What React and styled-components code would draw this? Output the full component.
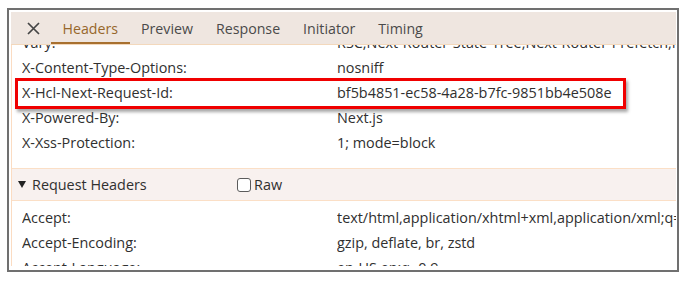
import React from 'react'
import styled, {createGlobalStyle} from 'styled-components'

const GlobalStyle = createGlobalStyle`
    body {
        margin: 0;
        background: #fff;
        font-family: "Open Sans", "Noto Sans", sans-serif;
        color: #303030;
    }
`

const Frame = styled.div`
    box-sizing: border-box;
    margin: 8px 0 0 7px;
    width: 672px;
    height: 264px;
    border: 2px solid #707070;
    padding: 2px 1px 4px 2px;
    background: #fff;
`

const Panel = styled.div`
    height: 100%;
    display: flex;
    flex-direction: column;
    overflow: hidden;
`

const TabBar = styled.div`
    flex: none;
    height: 32px;
    display: flex;
    align-items: stretch;
    background-color: #efe6e0;
    border-bottom: 1px solid #f3d8bc;
`

const CloseButton = styled.div`
    display: flex;
    align-items: center;
    margin: 0 11px 0 16px;
    color: #454545;
`

const Tab = styled.div`
    display: flex;
    align-items: center;
    padding: 0 11.5px;
    font-size: 14.2px;
    color: ${({active}) => active ? '#97672b' : '#4a4a4a'};
    box-shadow: ${({active}) => active ? 'inset 0 -2px 0 #a8702f' : 'none'};
`

const Content = styled.div`
    flex: 1;
    overflow: hidden;
    border-left: 1px solid #fbdcc2;
`

const Scroller = styled.div`
    margin-top: -15px;
`

const Section = styled.div`
    padding: ${({pad}) => pad};
`

const Row = styled.div`
    position: relative;
    height: 25px;
    line-height: 25px;
    display: grid;
    grid-template-columns: 315px 1fr;
    padding-left: 10px;
    font-size: 14.4px;
    white-space: nowrap;

    span {
        overflow: hidden;
    }

    ${({marked}) => marked && `
        &::after {
            content: '';
            position: absolute;
            left: 3px;
            top: -2px;
            bottom: -4px;
            width: 611px;
            box-sizing: border-box;
            border: 3px solid #f00000;
            box-shadow: 2px 3px 3px rgba(0, 0, 0, 0.35);
        }
    `}
`

const SectionHeader = styled.div`
    height: 31px;
    display: flex;
    align-items: center;
    padding-left: 6px;
    background-color: #f8f1ef;
    border-top: 1px solid #fbdfc6;
    border-bottom: 1px solid #fbdfc6;
    font-size: 14.4px;
`

const Title = styled.div`
    width: 219px;
    display: flex;
    align-items: center;
    gap: 6px;
`

const CheckLabel = styled.label`
    display: flex;
    align-items: center;
    gap: 3px;
`

const CheckBox = styled.span`
    box-sizing: border-box;
    width: 14px;
    height: 14px;
    border: 1.5px solid #5c5c5c;
    border-radius: 3px;
    background: #fff;
`

const responseHeaders = [
    ['Vary:', 'RSC,Next-Router-State-Tree,Next-Router-Prefetch,Next-Router-Segment-Prefetch'],
    ['X-Content-Type-Options:', 'nosniff'],
    ['X-Hcl-Next-Request-Id:', 'bf5b4851-ec58-4a28-b7fc-9851bb4e508e', true],
    ['X-Powered-By:', 'Next.js'],
    ['X-Xss-Protection:', '1; mode=block'],
]

const requestHeaders = [
    ['Accept:', 'text/html,application/xhtml+xml,application/xml;q=0.9,image/avif,image/webp'],
    ['Accept-Encoding:', 'gzip, deflate, br, zstd'],
    ['Accept-Language:', 'en-US,en;q=0.9'],
]

const tabs = ['Headers', 'Preview', 'Response', 'Initiator', 'Timing']

function App() {
    return (
        <>
            <GlobalStyle />
            <Frame>
                <Panel>
                    <TabBar>
                        <CloseButton>
                            <svg width="13" height="13" viewBox="0 0 13 13">
                                <path d="M1 1L12 12M12 1L1 12" stroke="currentColor" strokeWidth="1.7" />
                            </svg>
                        </CloseButton>
                        {tabs.map(tab => <Tab key={tab} active={tab === 'Headers'}>{tab}</Tab>)}
                    </TabBar>
                    <Content>
                        <Scroller>
                            <Section pad="0 0 13px">
                                {responseHeaders.map(([name, value, marked]) =>
                                    <Row key={name} marked={marked}>
                                        <span>{name}</span>
                                        <span>{value}</span>
                                    </Row>
                                )}
                            </Section>
                            <SectionHeader>
                                <Title>
                                    <svg width="8" height="7" viewBox="0 0 8 7">
                                        <polygon points="0,0 8,0 4,7" fill="#222" />
                                    </svg>
                                    Request Headers
                                </Title>
                                <CheckLabel>
                                    <CheckBox />
                                    Raw
                                </CheckLabel>
                            </SectionHeader>
                            <Section pad="4px 0 0">
                                {requestHeaders.map(([name, value]) =>
                                    <Row key={name}>
                                        <span>{name}</span>
                                        <span>{value}</span>
                                    </Row>
                                )}
                            </Section>
                        </Scroller>
                    </Content>
                </Panel>
            </Frame>
        </>
    )
}

export default App
